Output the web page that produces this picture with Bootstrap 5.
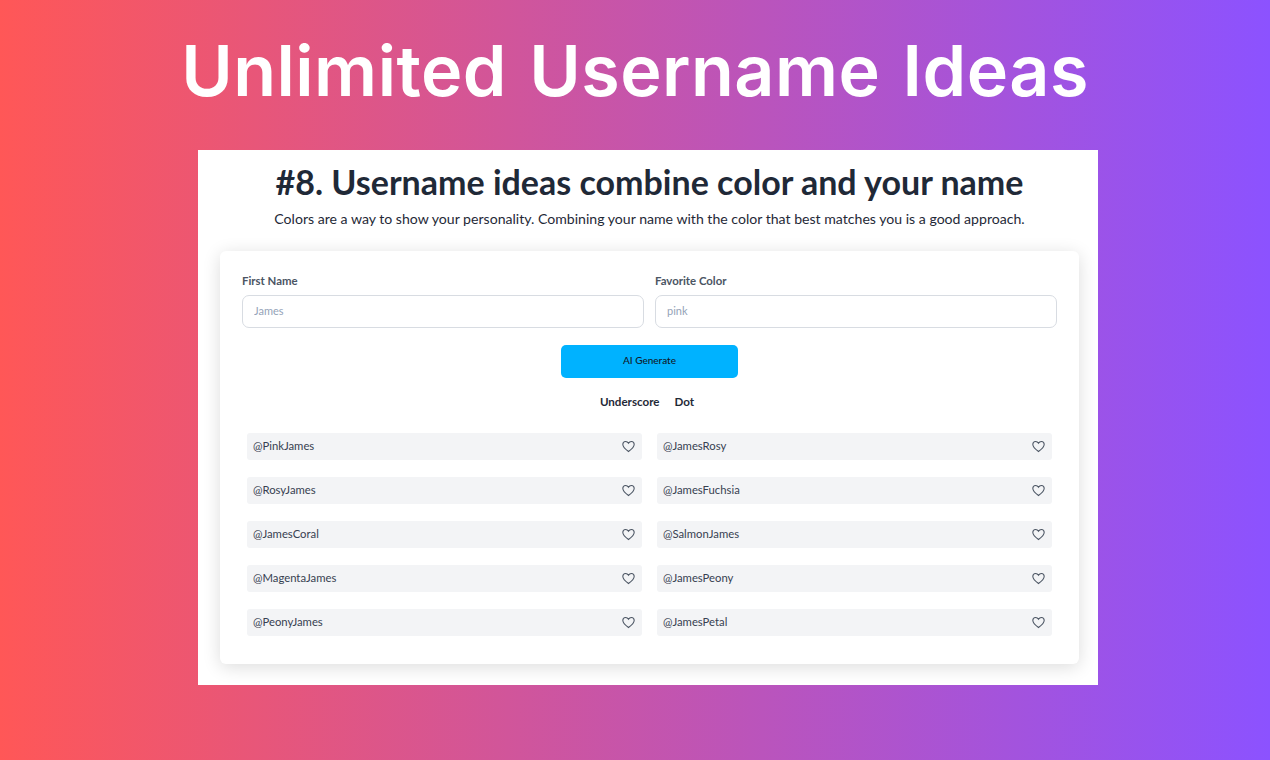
<!DOCTYPE html>
<html lang="en">
<head>
<meta charset="utf-8">
<title>Unlimited Username Ideas</title>
<link rel="stylesheet" href="https://cdn.jsdelivr.net/npm/bootstrap@5.3.0/dist/css/bootstrap.min.css">
<style>
html,body{height:100%;margin:0}
body{width:1270px;height:760px;overflow:hidden;background:linear-gradient(90deg,#ff5757,#8c52ff);font-family:"Lato","Noto Sans",sans-serif;color:#1f2937}
.hero-title{height:150px;margin:0;padding-top:29px;font-family:"Inter",sans-serif;font-weight:600;font-size:70px;line-height:84px;color:#fff;text-align:center;letter-spacing:.5px;word-spacing:4px}
.sheet{width:900px;height:535px;margin-left:198px;background:#fff;padding:12px 19px 0 22px}
.sheet-head{font-family:"Lato","Noto Sans",sans-serif;font-weight:700;font-size:34px;line-height:40px;text-align:center;color:#1f2937;margin:0}
.sheet-sub{font-family:"Lato",sans-serif;font-size:14.1px;line-height:20px;text-align:center;margin:7px 0 0;color:#1f2937}
.panel{height:413px;margin-top:22px;background:#fff;border-radius:6px;box-shadow:0 3px 18px rgba(0,0,0,.14);padding:22px 22px 0}
.fields{display:grid;grid-template-columns:402px 402px;column-gap:11px}
.fld-label{display:block;font-size:11.4px;line-height:16px;font-weight:700;color:#4b5563;margin-bottom:6px}
.fld-input{height:33px;border:1px solid #d8dce2;border-radius:7px;padding:0 11px 2px;font-size:11px;box-shadow:none}
.fld-input::placeholder{color:#94a3b8;opacity:1}
.gen-wrap{margin-top:17px}
.gen-btn{width:177px;height:33px;padding:0 0 2px;background:#00b2ff;border:0;border-radius:5px;font-size:10px;font-weight:500;color:#111827}
.gen-btn:hover{background:#00b2ff;color:#111827}
.tab-row{margin-top:16px;height:17px;font-size:11.6px;line-height:16px;font-weight:700;color:#1f2937;gap:15px;padding-right:5px}
.names{display:grid;grid-template-columns:395px 395px;column-gap:15px;row-gap:17px;margin:22px 0 0 5px}
.name-item{height:27px;background:#f3f4f6;border-radius:3px;padding:0 7px 0 6px;font-size:11.3px;color:#374151}
.heart{width:13px;height:13px;fill:none;stroke:#4b5563;stroke-width:1.3}
</style>
</head>
<body>
<h1 class="hero-title">Unlimited Username Ideas</h1>
<main class="sheet">
  <h2 class="sheet-head">#8. Username ideas combine color and your name</h2>
  <p class="sheet-sub">Colors are a way to show your personality. Combining your name with the color that best matches you is a good approach.</p>
  <section class="panel">
    <div class="fields">
      <div><label class="fld-label" for="a">First Name</label><input id="a" class="form-control fld-input" placeholder="James"></div>
      <div><label class="fld-label" for="b">Favorite Color</label><input id="b" class="form-control fld-input" placeholder="pink"></div>
    </div>
    <div class="gen-wrap d-flex justify-content-center"><button class="btn gen-btn" type="button">AI Generate</button></div>
    <div class="tab-row d-flex justify-content-center"><span>Underscore</span><span>Dot</span></div>
    <div class="names">
      <div class="name-item d-flex align-items-center justify-content-between"><span>@PinkJames</span><svg class="heart" viewBox="0 0 16 16"><path d="M8 14.2C3.6 10.9 1 8.500 1 5.500 1 3.300 2.600 1.800 4.500 1.800c1.400 0 2.700.8 3.500 2.200.8-1.400 2.100-2.200 3.500-2.200 1.900 0 3.500 1.500 3.500 3.700 0 3-2.600 5.400-7 8.700z"/></svg></div>
      <div class="name-item d-flex align-items-center justify-content-between"><span>@JamesRosy</span><svg class="heart" viewBox="0 0 16 16"><path d="M8 14.2C3.6 10.9 1 8.500 1 5.500 1 3.300 2.600 1.800 4.500 1.800c1.400 0 2.700.8 3.500 2.200.8-1.400 2.100-2.200 3.500-2.200 1.900 0 3.500 1.500 3.500 3.700 0 3-2.600 5.400-7 8.700z"/></svg></div>
      <div class="name-item d-flex align-items-center justify-content-between"><span>@RosyJames</span><svg class="heart" viewBox="0 0 16 16"><path d="M8 14.2C3.6 10.9 1 8.500 1 5.500 1 3.300 2.600 1.800 4.500 1.800c1.400 0 2.700.8 3.500 2.200.8-1.400 2.100-2.200 3.500-2.200 1.900 0 3.500 1.500 3.500 3.700 0 3-2.600 5.400-7 8.700z"/></svg></div>
      <div class="name-item d-flex align-items-center justify-content-between"><span>@JamesFuchsia</span><svg class="heart" viewBox="0 0 16 16"><path d="M8 14.2C3.6 10.9 1 8.500 1 5.500 1 3.300 2.600 1.800 4.500 1.800c1.400 0 2.700.8 3.500 2.200.8-1.400 2.100-2.200 3.500-2.200 1.900 0 3.500 1.500 3.500 3.700 0 3-2.600 5.400-7 8.700z"/></svg></div>
      <div class="name-item d-flex align-items-center justify-content-between"><span>@JamesCoral</span><svg class="heart" viewBox="0 0 16 16"><path d="M8 14.2C3.6 10.9 1 8.500 1 5.500 1 3.300 2.600 1.800 4.500 1.800c1.400 0 2.700.8 3.500 2.200.8-1.400 2.100-2.200 3.500-2.200 1.900 0 3.500 1.500 3.500 3.700 0 3-2.600 5.400-7 8.700z"/></svg></div>
      <div class="name-item d-flex align-items-center justify-content-between"><span>@SalmonJames</span><svg class="heart" viewBox="0 0 16 16"><path d="M8 14.2C3.6 10.9 1 8.500 1 5.500 1 3.300 2.600 1.800 4.500 1.800c1.400 0 2.700.8 3.500 2.200.8-1.400 2.100-2.200 3.500-2.200 1.900 0 3.500 1.500 3.500 3.700 0 3-2.600 5.400-7 8.700z"/></svg></div>
      <div class="name-item d-flex align-items-center justify-content-between"><span>@MagentaJames</span><svg class="heart" viewBox="0 0 16 16"><path d="M8 14.2C3.6 10.9 1 8.500 1 5.500 1 3.300 2.600 1.800 4.500 1.800c1.400 0 2.700.8 3.500 2.200.8-1.400 2.100-2.200 3.500-2.200 1.900 0 3.500 1.500 3.500 3.700 0 3-2.600 5.400-7 8.700z"/></svg></div>
      <div class="name-item d-flex align-items-center justify-content-between"><span>@JamesPeony</span><svg class="heart" viewBox="0 0 16 16"><path d="M8 14.2C3.6 10.9 1 8.500 1 5.500 1 3.300 2.600 1.800 4.500 1.800c1.400 0 2.700.8 3.500 2.200.8-1.400 2.100-2.200 3.500-2.200 1.900 0 3.500 1.500 3.500 3.700 0 3-2.600 5.400-7 8.700z"/></svg></div>
      <div class="name-item d-flex align-items-center justify-content-between"><span>@PeonyJames</span><svg class="heart" viewBox="0 0 16 16"><path d="M8 14.2C3.6 10.9 1 8.500 1 5.500 1 3.300 2.600 1.800 4.500 1.800c1.400 0 2.700.8 3.500 2.200.8-1.400 2.100-2.200 3.500-2.200 1.900 0 3.500 1.500 3.500 3.700 0 3-2.600 5.400-7 8.700z"/></svg></div>
      <div class="name-item d-flex align-items-center justify-content-between"><span>@JamesPetal</span><svg class="heart" viewBox="0 0 16 16"><path d="M8 14.2C3.6 10.9 1 8.500 1 5.500 1 3.300 2.600 1.800 4.500 1.800c1.400 0 2.700.8 3.500 2.200.8-1.400 2.100-2.200 3.500-2.200 1.900 0 3.500 1.500 3.500 3.700 0 3-2.600 5.400-7 8.700z"/></svg></div>
    </div>
  </section>
</main>
<script src="https://cdn.jsdelivr.net/npm/bootstrap@5.3.0/dist/js/bootstrap.bundle.min.js"></script>
</body>
</html>
